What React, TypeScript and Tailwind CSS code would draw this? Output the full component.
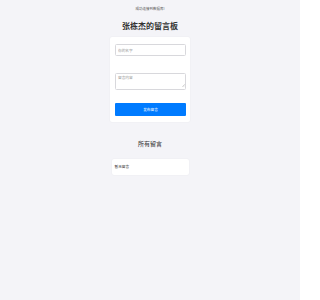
export default function App() {
  const font = { fontFamily: '"Noto Sans CJK SC", "Noto Sans", sans-serif' };
  return (
    <div className="min-h-[300px] w-[300px] bg-[#f4f4f8] flex flex-col items-center" style={font}>
      <p className="mt-[7px] text-[3.5px] leading-[4px] text-[#555]">成功连接到数据库!</p>
      <h1 className="mt-[10px] text-[8px] leading-[10px] font-bold text-[#333]">张栋杰的留言板</h1>
      <div className="mt-[6px] w-[80px] bg-white rounded-[2px] shadow-[0_0_2px_rgba(0,0,0,0.06)] pt-[7px] px-[5px] pb-[6px] flex flex-col">
        <input
          className="h-[12px] w-[71px] border-[0.5px] border-[#d8d8dc] rounded-[1.5px] px-[2px] text-[3.7px] outline-none placeholder:text-[#999]"
          placeholder="你的名字"
        />
        <div className="relative mt-[15px] h-[17px] w-[71px]">
          <textarea
            className="h-full w-full resize-none border-[0.5px] border-[#d8d8dc] rounded-[1.5px] px-[2px] py-[2px] text-[3.7px] leading-[4px] outline-none placeholder:text-[#999]"
            placeholder="留言内容"
          />
          <svg className="absolute right-[1px] bottom-[1px] w-[3px] h-[3px]" viewBox="0 0 6 6">
            <path d="M5.5 0.5 L0.5 5.5 M5.5 3 L3 5.5" stroke="#999" strokeWidth="0.8" />
          </svg>
        </div>
        <button className="mt-[15px] h-[13px] w-[71px] bg-[#007bff] rounded-[1px] text-white text-[3.7px]">
          发布留言
        </button>
      </div>
      <h2 className="mt-[18px] text-[6px] leading-[8px] text-[#333]">所有留言</h2>
      <div className="mt-[11px] w-[77px] h-[16px] bg-white rounded-[2px] shadow-[0_0_2px_rgba(0,0,0,0.06)] px-[3px] flex items-center">
        <span className="text-[3.7px] text-[#333]">暂无留言</span>
      </div>
    </div>
  );
}
